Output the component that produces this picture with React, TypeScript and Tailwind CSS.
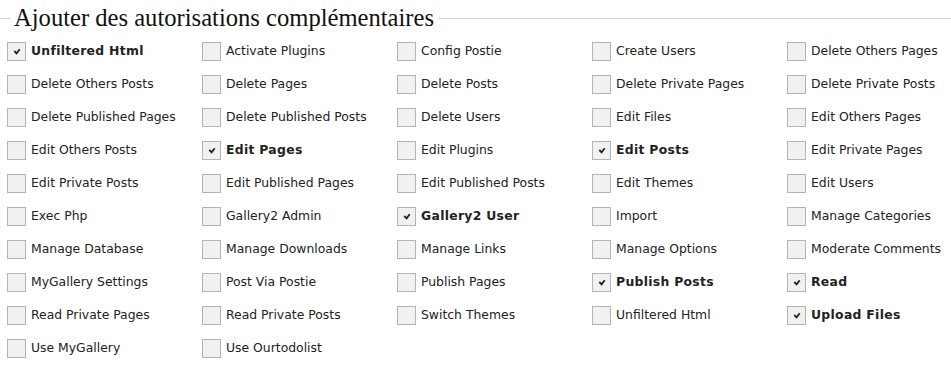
const perms: [string, boolean][] = [
  ["Unfiltered Html", true],
  ["Activate Plugins", false],
  ["Config Postie", false],
  ["Create Users", false],
  ["Delete Others Pages", false],
  ["Delete Others Posts", false],
  ["Delete Pages", false],
  ["Delete Posts", false],
  ["Delete Private Pages", false],
  ["Delete Private Posts", false],
  ["Delete Published Pages", false],
  ["Delete Published Posts", false],
  ["Delete Users", false],
  ["Edit Files", false],
  ["Edit Others Pages", false],
  ["Edit Others Posts", false],
  ["Edit Pages", true],
  ["Edit Plugins", false],
  ["Edit Posts", true],
  ["Edit Private Pages", false],
  ["Edit Private Posts", false],
  ["Edit Published Pages", false],
  ["Edit Published Posts", false],
  ["Edit Themes", false],
  ["Edit Users", false],
  ["Exec Php", false],
  ["Gallery2 Admin", false],
  ["Gallery2 User", true],
  ["Import", false],
  ["Manage Categories", false],
  ["Manage Database", false],
  ["Manage Downloads", false],
  ["Manage Links", false],
  ["Manage Options", false],
  ["Moderate Comments", false],
  ["MyGallery Settings", false],
  ["Post Via Postie", false],
  ["Publish Pages", false],
  ["Publish Posts", true],
  ["Read", true],
  ["Read Private Pages", false],
  ["Read Private Posts", false],
  ["Switch Themes", false],
  ["Unfiltered Html", false],
  ["Upload Files", true],
  ["Use MyGallery", false],
  ["Use Ourtodolist", false],
];

function Box({ checked }: { checked: boolean }) {
  return (
    <span className="flex h-[19px] w-[19px] shrink-0 items-center justify-center border border-[#b4b4b4] bg-[#f1f1f1]">
      {checked && (
        <svg width="8" height="7" viewBox="0 0 8 7">
          <path d="M1.3 3 L3.6 5.3 L6.7 1.3" fill="none" stroke="#222" strokeWidth="1.8" />
        </svg>
      )}
    </span>
  );
}

export default function App() {
  return (
    <div className="h-[366px] w-[951px] bg-white text-[#222]">
      <div className="flex items-center pt-[4px]">
        <div className="h-px w-[10px] bg-[#cfcfcf]" />
        <h2 className="px-[4px] font-['Liberation_Serif',serif] text-[24.6px] leading-[28px] text-[#111]">
          Ajouter des autorisations complémentaires
        </h2>
        <div className="h-px flex-1 bg-[#cfcfcf]" />
      </div>
      <ul className="grid grid-cols-[repeat(5,195px)] pl-[7px] pt-[3px] font-['DejaVu_Sans',sans-serif] text-[12.4px]">
        {perms.map(([name, checked], i) => (
          <li key={i} className="flex h-[33px] items-center gap-[5px]">
            <Box checked={checked} />
            <span className={checked ? "font-bold tracking-[0.3px]" : ""}>{name}</span>
          </li>
        ))}
      </ul>
    </div>
  );
}
